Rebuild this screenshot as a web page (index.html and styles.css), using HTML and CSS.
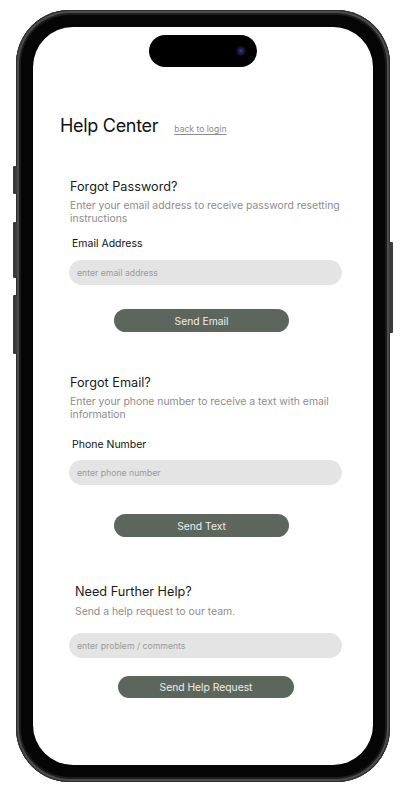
FILE: index.html
```html
<!DOCTYPE html>
<html lang="en">
<head>
<meta charset="utf-8">
<title>Help Center</title>
<link rel="stylesheet" href="styles.css">
</head>
<body>
<div class="phone">
  <span class="side-btn side-btn--action"></span>
  <span class="side-btn side-btn--vol-up"></span>
  <span class="side-btn side-btn--vol-down"></span>
  <span class="side-btn side-btn--power"></span>
  <div class="screen">
    <div class="island"><span class="camera"></span></div>

    <header class="header">
      <h1 class="title">Help Center</h1>
      <a class="back-link" href="#">back to login</a>
    </header>

    <section class="section section--password">
      <h2 class="section-title">Forgot Password?</h2>
      <p class="section-desc">Enter your email address to receive password resetting instructions</p>
      <label class="field-label field-label--email">Email Address</label>
      <input class="field field--email" type="text" placeholder="enter email address">
      <button class="btn btn--email">Send Email</button>
    </section>

    <section class="section section--email">
      <h2 class="section-title">Forgot Email?</h2>
      <p class="section-desc section-desc--phone">Enter your phone number to receive a text with email information</p>
      <label class="field-label field-label--phone">Phone Number</label>
      <input class="field field--phone" type="text" placeholder="enter phone number">
      <button class="btn btn--text">Send Text</button>
    </section>

    <section class="section section--help">
      <h2 class="section-title section-title--help">Need Further Help?</h2>
      <p class="section-desc section-desc--help">Send a help request to our team.</p>
      <input class="field field--help" type="text" placeholder="enter problem / comments">
      <button class="btn btn--help">Send Help Request</button>
    </section>
  </div>
</div>
</body>
</html>
```

FILE: styles.css
```css
* {
  box-sizing: border-box;
}

html, body {
  margin: 0;
  padding: 0;
  background: #ffffff;
}

body {
  font-family: Inter, "Noto Sans", "Liberation Sans", sans-serif;
  color: #1a1a1a;
}

.phone {
  position: relative;
  margin: 10px 0 0 16px;
  width: 374px;
  height: 772px;
  padding: 17px;
  border-radius: 54px;
  background: #050505;
  box-shadow: inset 0 0 0 1px #2e2e2e, inset 0 0 0 3px #4c4c4c, inset 0 0 0 5px #1c1c1c;
}

.side-btn {
  position: absolute;
  width: 4px;
  background: #3a3a3a;
  border-radius: 1px;
}

.side-btn--action { left: -3px; top: 156px; height: 28px; }
.side-btn--vol-up { left: -3px; top: 212px; height: 56px; }
.side-btn--vol-down { left: -3px; top: 285px; height: 59px; }
.side-btn--power { right: -3px; top: 232px; height: 91px; }

.screen {
  position: relative;
  width: 340px;
  height: 738px;
  background: #ffffff;
  border-radius: 40px;
  overflow: hidden;
  padding: 87px 22px 0 36px;
  display: flex;
  flex-direction: column;
}

.island {
  position: absolute;
  left: 116px;
  top: 8px;
  width: 108px;
  height: 32px;
  border-radius: 16px;
  background: #000000;
}

.camera {
  position: absolute;
  right: 11px;
  top: 11px;
  width: 10px;
  height: 10px;
  border-radius: 50%;
  background: radial-gradient(circle, #3a4a9a 0, #1a2050 30%, #0b0b1a 70%);
}

.header {
  display: flex;
  align-items: baseline;
  gap: 16px;
  margin-left: -9px;
}

.title {
  margin: 0;
  font-size: 18px;
  letter-spacing: -0.3px;
  line-height: 24px;
  font-weight: 400;
  color: #111111;
}

.back-link {
  font-size: 8.6px;
  color: #8a8a8a;
  text-decoration: underline;
  text-underline-offset: 2px;
}

.section {
  display: flex;
  flex-direction: column;
  align-items: flex-start;
}

.section--password { margin-top: 41px; }
.section--email { margin-top: 43px; }
.section--help { margin-top: 47px; }

.section-title {
  margin: 0;
  font-size: 12.7px;
  line-height: 16px;
  font-weight: 400;
  color: #1a1a1a;
  padding-left: 1px;
}

.section-title--help {
  padding-left: 6px;
}

.section-desc {
  margin: 5px 0 0;
  font-size: 10.4px;
  line-height: 12.5px;
  color: #8c8c8c;
  padding-left: 1px;
}

.section-desc--phone {
  margin-top: 4px;
  line-height: 13px;
}

.section-desc--help {
  margin-top: 5px;
  line-height: 13px;
  padding-left: 6px;
}

.field-label {
  font-size: 10.5px;
  line-height: 14px;
  color: #111111;
  padding-left: 3px;
}

.field-label--email { margin-top: 12px; }
.field-label--phone { margin-top: 17px; }

.field {
  display: block;
  width: 273px;
  height: 25px;
  margin-top: 9px;
  padding: 0 8px;
  border: none;
  outline: none;
  border-radius: 13px;
  background: #e4e4e4;
  font-family: inherit;
  font-size: 8.7px;
  color: #333333;
}

.field::placeholder {
  color: #9a9a9a;
}

.field--phone { margin-top: 8px; }
.field--help { margin-top: 15px; }

.btn {
  display: block;
  width: 175px;
  height: 23px;
  margin: 24px 0 0 45px;
  border: none;
  border-radius: 12px;
  background: #5d665c;
  color: #eeeeee;
  font-family: inherit;
  font-size: 10.3px;
  padding: 0;
}

.btn--text { margin-top: 29px; }

.btn--help {
  margin: 18px 0 0 49px;
  width: 176px;
  height: 22px;
}
```
